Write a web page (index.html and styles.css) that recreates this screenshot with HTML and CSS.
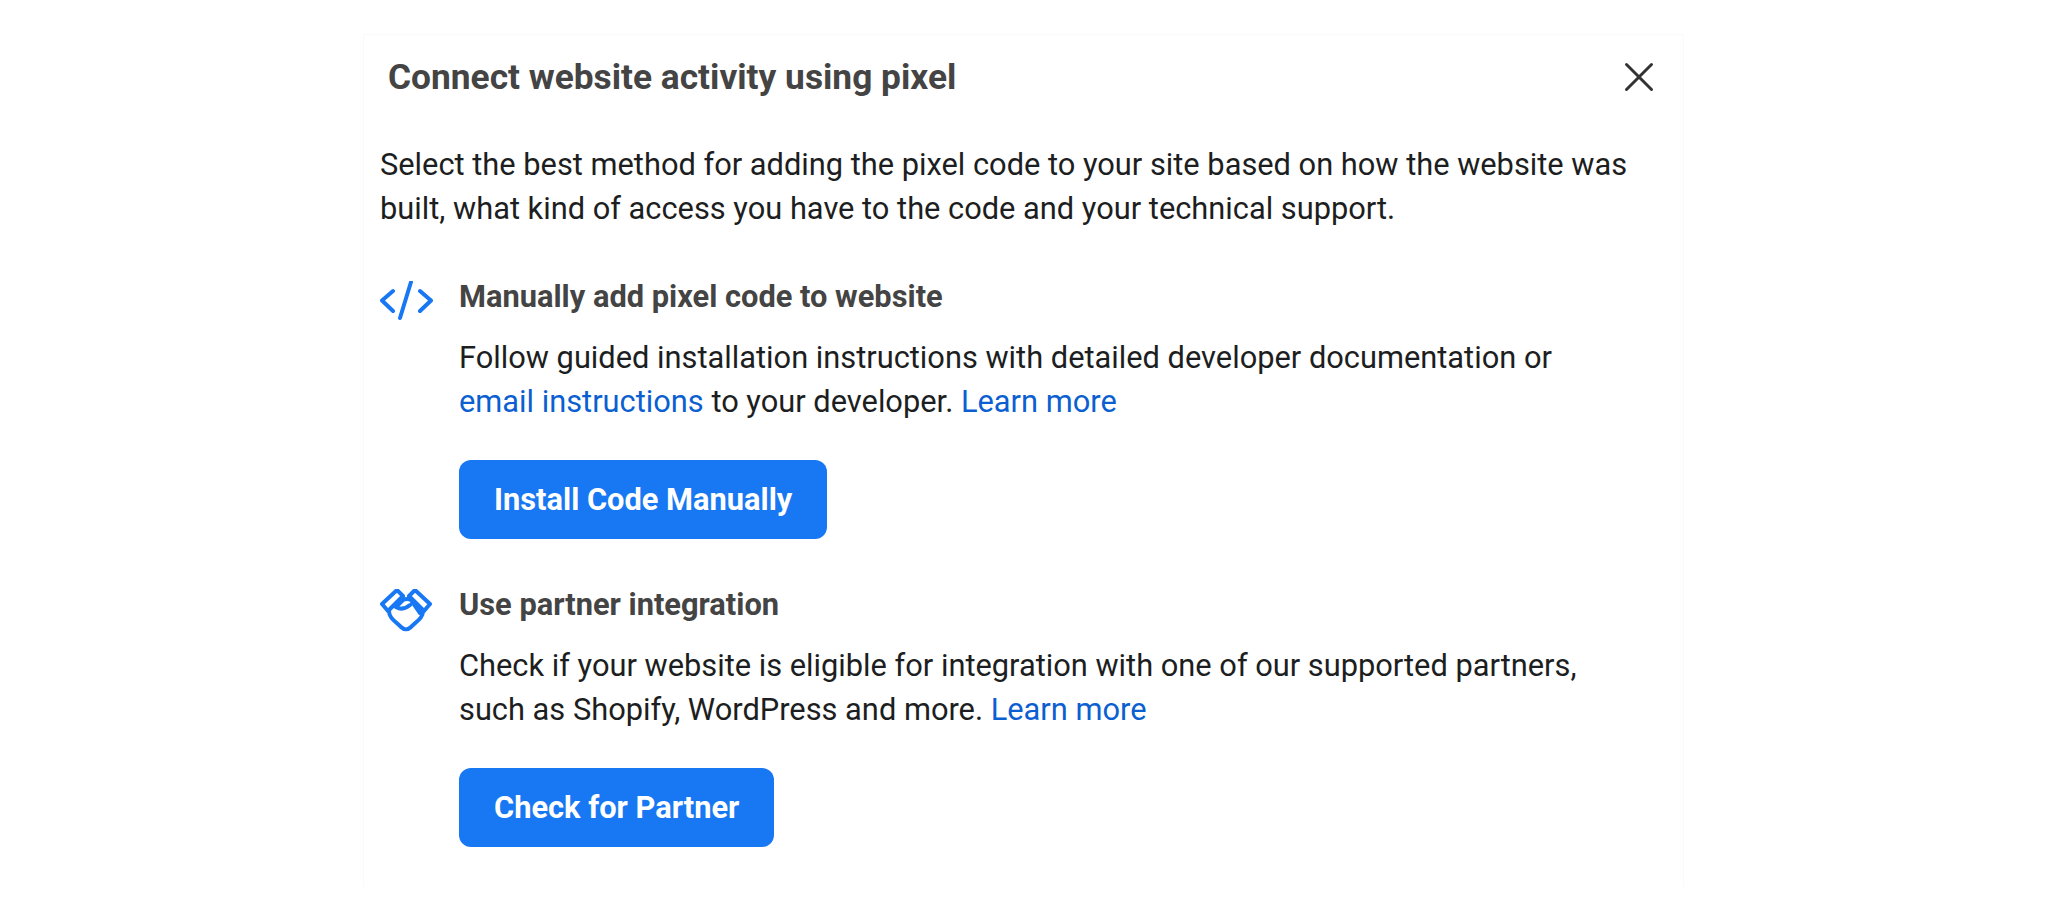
FILE: index.html
```html
<!DOCTYPE html>
<html lang="en">
<head>
    <meta charset="UTF-8">
    <title>Connect website activity using pixel</title>
    <link rel="stylesheet" href="styles.css">
</head>
<body>
    <section class="dialog">
        <header class="top">
            <h2>Connect website activity using pixel</h2>
            <button class="close" aria-label="Close">
                <svg width="30" height="30" viewBox="0 0 30 30"><path d="M2.500 2.500 27.500 27.500M27.500 2.500 2.500 27.500"/></svg>
            </button>
        </header>
        <p class="intro">Select the best method for adding the pixel code to your site based on how the website was built, what kind of access you have to the code and your technical support.</p>
        <div class="option">
            <div class="icon">
                <svg width="56" height="42" viewBox="0 2 56 42"><path d="M13 12 2 21.500 13 32M40 12 51 21.500 40 32M31 3 20 39"/></svg>
            </div>
            <div class="info">
                <h3>Manually add pixel code to website</h3>
                <p>Follow guided installation instructions with detailed developer documentation or <a href="#">email instructions</a> to your developer. <a href="#">Learn more</a></p>
                <button class="btn">Install Code Manually</button>
            </div>
        </div>
        <div class="option">
            <div class="icon">
                <svg width="56" height="48" viewBox="15 16 56 48"><path d="M17 31 32 17 38 23 23 38ZM65 31 50 17 44 23 59 38ZM24 38C24 45 30 48 36 54 39 57 43 57 46 54 52 48 58 45 58 38M31 34 38 27Q42 25 46 27L55 40M31 34Q38 38 45 32"/></svg>
            </div>
            <div class="info">
                <h3>Use partner integration</h3>
                <p>Check if your website is eligible for integration with one of our supported partners, such as Shopify, WordPress and more. <a href="#">Learn more</a></p>
                <button class="btn">Check for Partner</button>
            </div>
        </div>
    </section>
</body>
</html>
```

FILE: styles.css
```css
body{
    margin: 0;
    height: 920px;
    overflow: hidden;
    background-color: #fff;
    font-family: Roboto, "Liberation Sans", sans-serif;
    color: #1c1e21;
}

.dialog{
    box-sizing: border-box;
    width: 1321px;
    height: 853px;
    margin: 34px 0 0 363px;
    padding: 17px 24px 0 16px;
    border: 1px solid #fafafa;
    border-bottom: 0;
}

.top{
    display: flex;
    justify-content: space-between;
    align-items: center;
    height: 50px;
    padding-left: 8px;
}

.top h2{
    margin: 0;
    font-size: 35.300px;
    font-weight: 700;
    color: #444;
}

.close{
    display: flex;
    padding: 0;
    margin-right: 5px;
    border: 0;
    background: none;
}

.close path{
    fill: none;
    stroke: #333;
    stroke-width: 3;
    stroke-linecap: round;
}

.intro{
    margin: 41px 0 0;
    font-size: 30.800px;
    line-height: 44px;
}

.option{
    display: flex;
    margin-top: 46px;
}

.icon{
    flex: none;
    width: 79px;
}

.icon svg{
    display: block;
    margin-top: 4px;
}

.icon path{
    fill: none;
    stroke: #1877f2;
    stroke-width: 4;
    stroke-linecap: round;
    stroke-linejoin: round;
}

.info h3{
    margin: 0;
    font-size: 30.800px;
    line-height: 40px;
    font-weight: 700;
    color: #444;
}

.info p{
    max-width: 1150px;
    margin: 19px 0 0;
    font-size: 30.800px;
    line-height: 43.500px;
}

.info a{
    color: #0b5fd1;
    text-decoration: none;
}

.btn{
    display: block;
    height: 79px;
    margin-top: 37px;
    padding: 0 35px;
    border: 0;
    border-radius: 12px;
    background-color: #1877f2;
    color: #fff;
    font-family: inherit;
    font-size: 30.800px;
    font-weight: 700;
}
```
